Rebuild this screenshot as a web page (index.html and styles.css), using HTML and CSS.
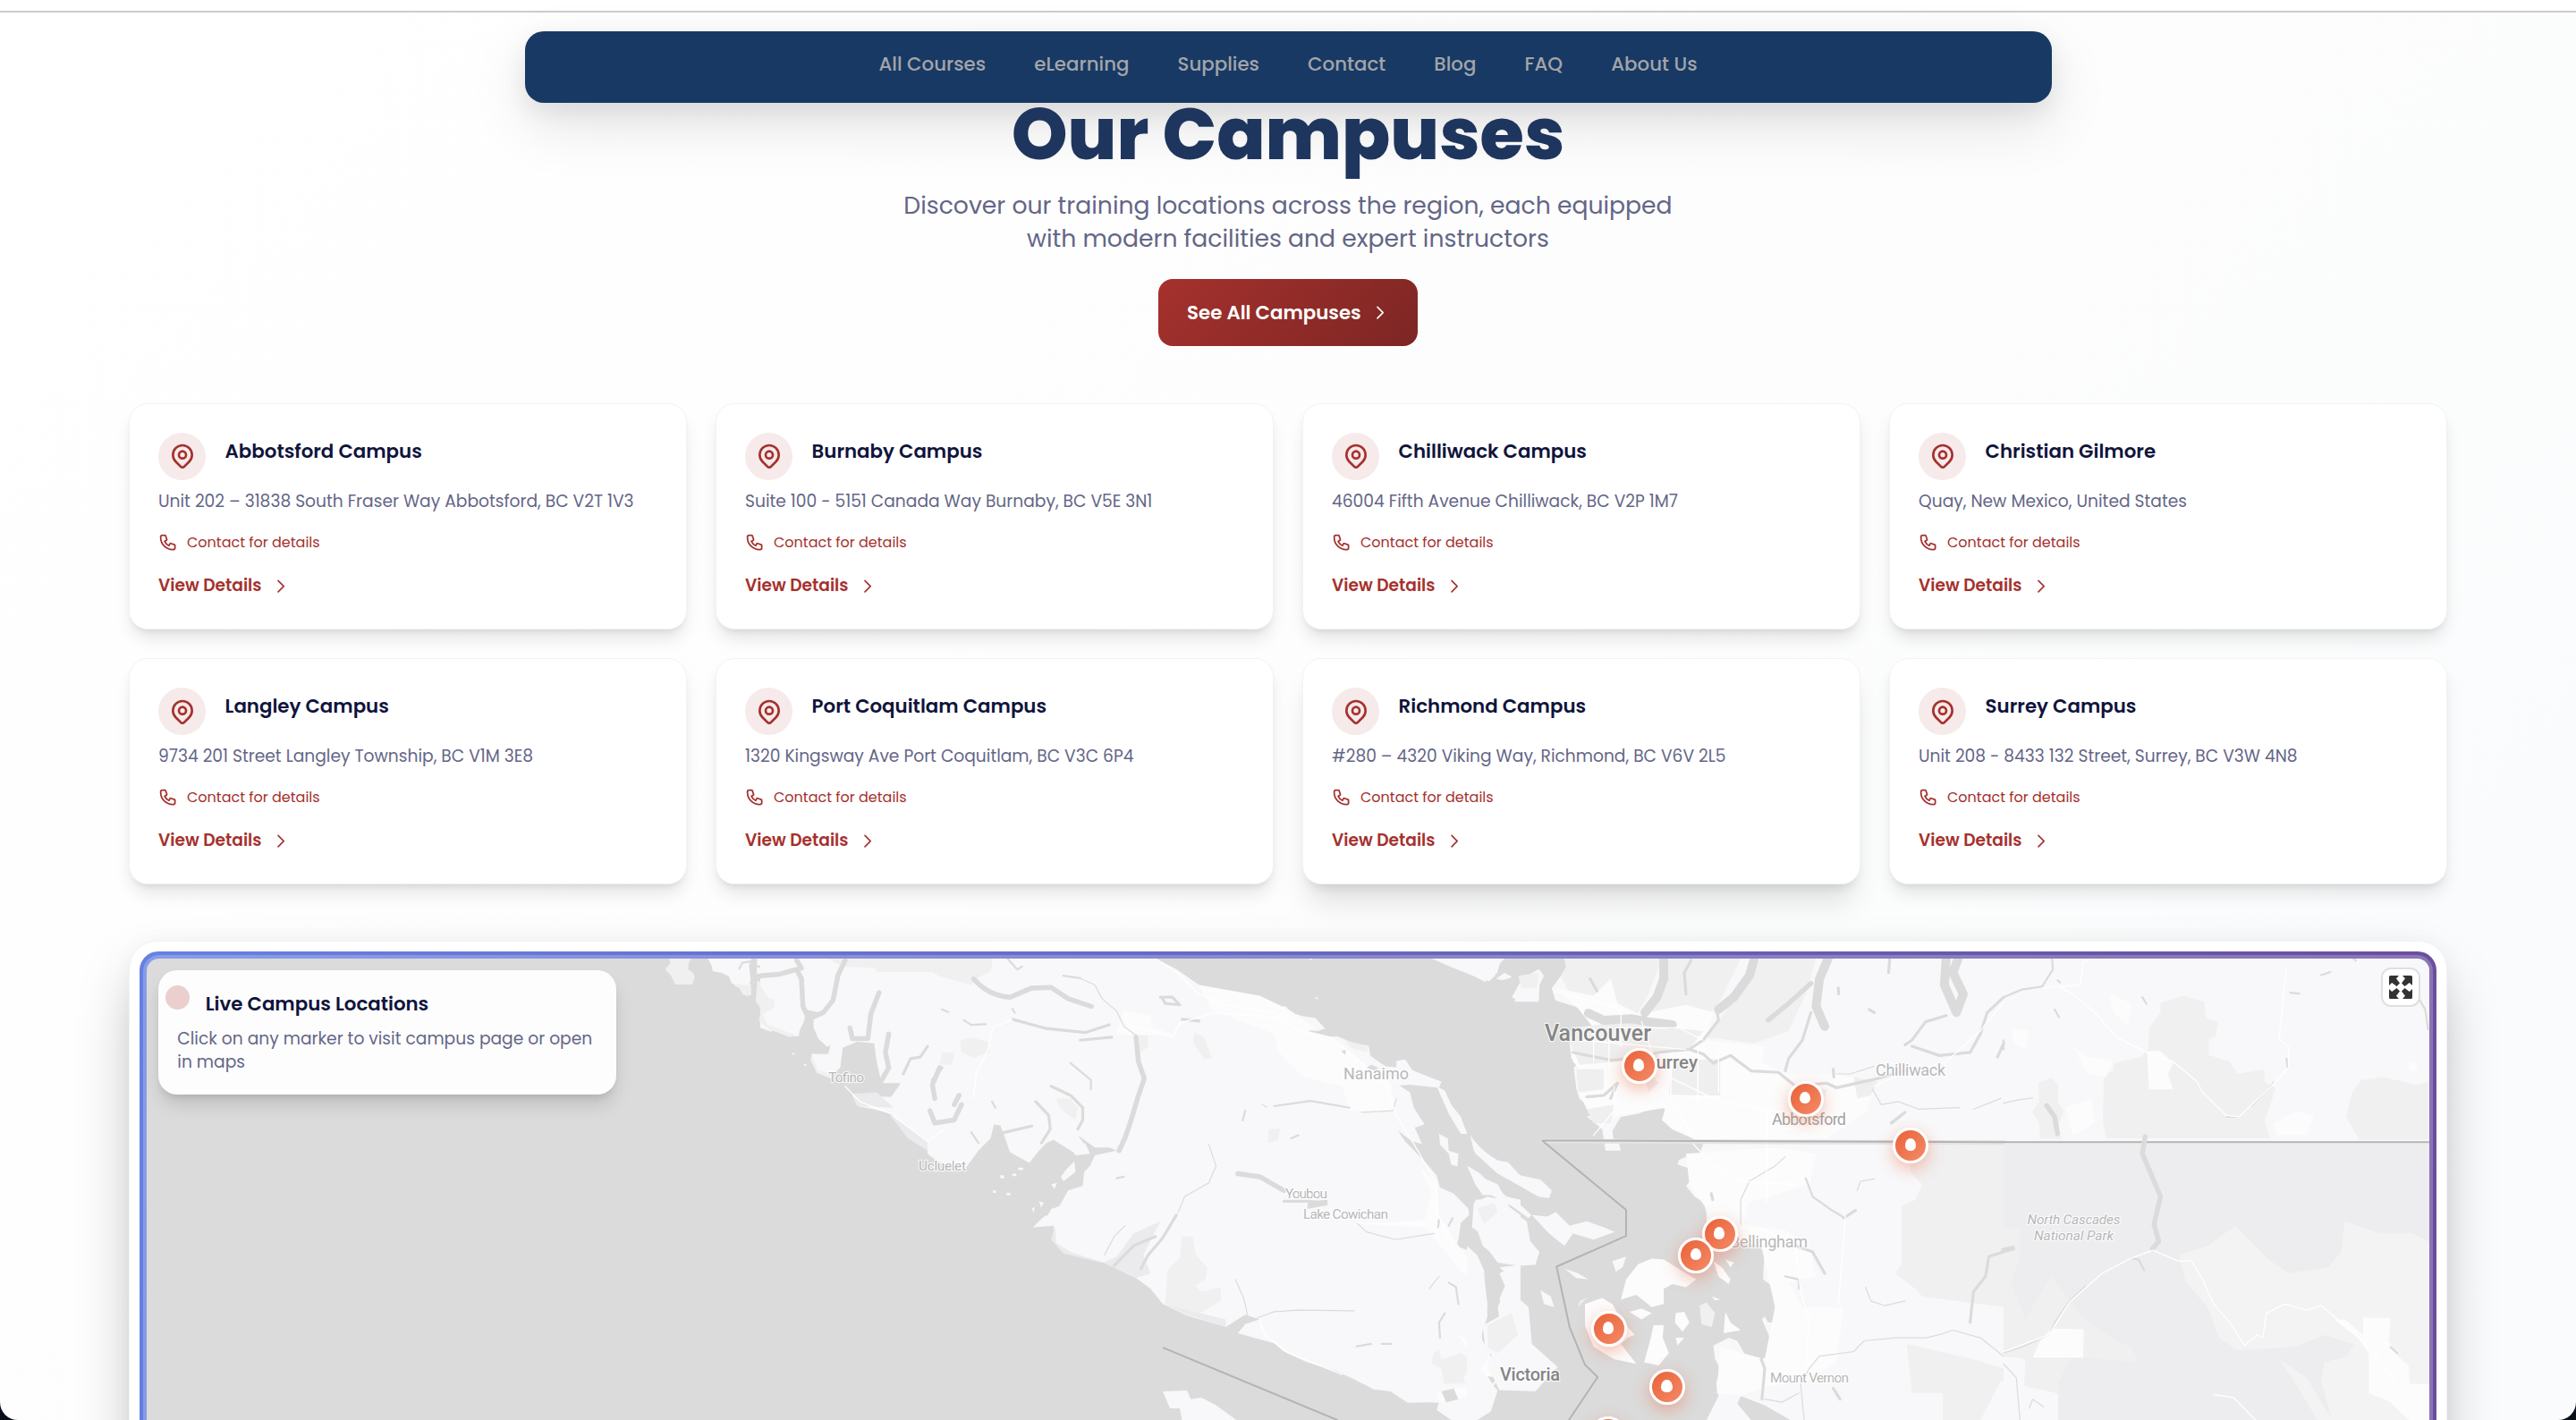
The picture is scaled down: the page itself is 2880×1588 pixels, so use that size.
FILE: index.html
```html
<!DOCTYPE html>
<html lang="en">
<head>
<meta charset="utf-8">
<title>Our Campuses</title>
<link rel="stylesheet" href="styles.css">
</head>
<body>
<svg class="sprite" aria-hidden="true">
  <symbol id="pin" viewBox="0 0 24 24"><path d="M17.657 16.657L13.414 20.9a1.998 1.998 0 01-2.827 0l-4.244-4.243a8 8 0 1111.314 0z"/><path d="M15 11a3 3 0 11-6 0 3 3 0 016 0z"/></symbol>
  <symbol id="phone" viewBox="0 0 24 24"><path d="M3 5a2 2 0 012-2h3.28a1 1 0 01.948.684l1.498 4.493a1 1 0 01-.502 1.21l-2.257 1.13a11.042 11.042 0 005.516 5.516l1.13-2.257a1 1 0 011.21-.502l4.493 1.498a1 1 0 01.684.949V19a2 2 0 01-2 2h-1C9.716 21 3 14.284 3 6V5z"/></symbol>
  <symbol id="chevron" viewBox="0 0 24 24"><path d="M9 5l7 7-7 7"/></symbol>
</svg>
<div class="window">
  <div class="topbar"></div>
  <nav class="nav">
    <a>All Courses</a><a>eLearning</a><a>Supplies</a><a>Contact</a><a>Blog</a><a>FAQ</a><a>About Us</a>
  </nav>
  <header class="hero">
    <h1>Our Campuses</h1>
    <p>Discover our training locations across the region, each equipped<br>with modern facilities and expert instructors</p>
    <a class="button">See All Campuses<svg class="icon-sm"><use href="#chevron"/></svg></a>
  </header>
  <main class="container">
    <section class="grid">
      <article class="card"><div class="card-head"><span class="badge"><svg><use href="#pin"/></svg></span><h3>Abbotsford Campus</h3></div><p class="address">Unit 202 – 31838 South Fraser Way Abbotsford, BC V2T 1V3</p><p class="contact"><svg class="icon-sm"><use href="#phone"/></svg>Contact for details</p><a class="details">View Details<svg class="icon-sm"><use href="#chevron"/></svg></a></article>
      <article class="card"><div class="card-head"><span class="badge"><svg><use href="#pin"/></svg></span><h3>Burnaby Campus</h3></div><p class="address">Suite 100 - 5151 Canada Way Burnaby, BC V5E 3N1</p><p class="contact"><svg class="icon-sm"><use href="#phone"/></svg>Contact for details</p><a class="details">View Details<svg class="icon-sm"><use href="#chevron"/></svg></a></article>
      <article class="card"><div class="card-head"><span class="badge"><svg><use href="#pin"/></svg></span><h3>Chilliwack Campus</h3></div><p class="address">46004 Fifth Avenue Chilliwack, BC V2P 1M7</p><p class="contact"><svg class="icon-sm"><use href="#phone"/></svg>Contact for details</p><a class="details">View Details<svg class="icon-sm"><use href="#chevron"/></svg></a></article>
      <article class="card"><div class="card-head"><span class="badge"><svg><use href="#pin"/></svg></span><h3>Christian Gilmore</h3></div><p class="address">Quay, New Mexico, United States</p><p class="contact"><svg class="icon-sm"><use href="#phone"/></svg>Contact for details</p><a class="details">View Details<svg class="icon-sm"><use href="#chevron"/></svg></a></article>
      <article class="card"><div class="card-head"><span class="badge"><svg><use href="#pin"/></svg></span><h3>Langley Campus</h3></div><p class="address">9734 201 Street Langley Township, BC V1M 3E8</p><p class="contact"><svg class="icon-sm"><use href="#phone"/></svg>Contact for details</p><a class="details">View Details<svg class="icon-sm"><use href="#chevron"/></svg></a></article>
      <article class="card"><div class="card-head"><span class="badge"><svg><use href="#pin"/></svg></span><h3>Port Coquitlam Campus</h3></div><p class="address">1320 Kingsway Ave Port Coquitlam, BC V3C 6P4</p><p class="contact"><svg class="icon-sm"><use href="#phone"/></svg>Contact for details</p><a class="details">View Details<svg class="icon-sm"><use href="#chevron"/></svg></a></article>
      <article class="card raised"><div class="card-head"><span class="badge"><svg><use href="#pin"/></svg></span><h3>Richmond Campus</h3></div><p class="address">#280 – 4320 Viking Way, Richmond, BC V6V 2L5</p><p class="contact"><svg class="icon-sm"><use href="#phone"/></svg>Contact for details</p><a class="details">View Details<svg class="icon-sm"><use href="#chevron"/></svg></a></article>
      <article class="card"><div class="card-head"><span class="badge"><svg><use href="#pin"/></svg></span><h3>Surrey Campus</h3></div><p class="address">Unit 208 - 8433 132 Street, Surrey, BC V3W 4N8</p><p class="contact"><svg class="icon-sm"><use href="#phone"/></svg>Contact for details</p><a class="details">View Details<svg class="icon-sm"><use href="#chevron"/></svg></a></article>
    </section>
    <section class="map-card"><div class="map-frame"><div class="map">
      <svg class="map-art" width="2552" height="516" viewBox="164 1072 2552 516">
        <!-- west inlets -->
        <g transform="translate(640 1060) scale(.3333)">
          <path class="park" d="M325 36L328 52 311 72 330 92 345 123 402 123 410 100 406 85 388 72 390 50 398 36zM620 110L615 180 632 205 626 245 645 275 665 282 690 268 720 290 700 120 650 120z"/>
          <path class="park" d="M525 100L545 128 560 135 570 155 585 162 600 158 598 120z"/>
          <path class="land" d="M455 36L468 62 470 78 500 84 525 95 535 120 590 125 598 110 592 60 600 36zM620 36L618 88 650 92 690 90 720 72 760 62 790 40 790 36zM665 125L720 100 745 115 758 160 760 215 765 250 760 295 745 298 710 268 665 268 658 205 680 185 655 160zM770 110L778 175 800 200 830 205 850 150 865 160 880 105 900 90 900 36 800 36 790 60 770 85zM810 230L880 235 900 200 900 305 855 332 825 305 808 265z"/>
          <path class="park" d="M720 82L745 68 778 75 770 95 735 98zM805 355L860 360 888 390 870 440 820 420 798 375z"/>
          <path class="land" d="M820 360L860 362 888 390 860 405z"/>
          <path class="water-line w4" d="M620 62L660 68 700 60M610 40L616 90 680 108 740 92M560 70L570 50 600 45M645 125L640 150"/>
        </g>
        <!-- Vancouver Island -->
        <g transform="translate(850 1050) scale(.54206 .34313)">
          <path class="land" d="M0 64L815 64 858 98 905 150 925 165 975 182 1020 185 1050 200 1065 220 1085 220 1092 240 1120 252 1145 258 1165 292 1150 300 1130 298 1135 312 1155 320 1190 318 1225 340 1255 348 1258 380 1275 400 1290 415 1312 418 1312 398 1330 393 1345 428 1380 450 1405 465 1400 485 1340 475 1318 478 1340 500 1348 550 1370 605 1350 615 1365 668 1345 660 1315 625 1330 660 1370 725 1395 770 1402 810 1430 830 1460 878 1462 900 1445 925 1440 980 1435 1000 1468 1020 1490 1075 1500 1190 1498 1240 1482 1250 1480 1300 1490 1380 1520 1385 1568 1370 1568 1400 1520 1440 1505 1475 1485 1510 1480 1540 1465 1568 1425 1568 1395 1535 1400 1512 1380 1510 1335 1512 1300 1475 1265 1468 1225 1435 1190 1410 1125 1378 1080 1345 1060 1318 985 1285 1000 1255 1030 1240 1000 1225 960 1265 880 1228 830 1190 805 1140 775 1105 708 1055 630 1025 608 990 605 935 562 940 585 905 610 890 635 820 665 805 668 760 680 740 690 705 735 690 720 680 690 680 655 640 678 690 655 703 635 685 605 655 590 665 575 690 555 730 515 695 505 650 495 608 482 605 475 650 450 690 420 755 365 725 345 700 345 665 305 650 270 570 235 555 200 545 190 510 270 515 290 470 250 470 240 400 235 340 200 335 170 355 165 420 150 440 120 430 105 375 140 375 145 345 110 290 120 240 95 230 90 270 75 318 0 290z"/>
          <path class="park" d="M140 64L170 90 235 95 240 108 355 108 370 122 435 150 445 130 475 105 480 64zM412 330L435 322 470 335 472 370 440 388 415 370zM0 150L15 190 30 200 28 225 5 245 15 280 75 315 60 320 20 295 0 270zM375 370L400 370 395 410 370 410zM610 520L640 520 655 550 650 590 620 555zM895 305L915 320 932 390 915 390 893 340zM870 970L892 970 898 1030 922 1070 918 1110 897 1130 910 1150 950 1135 950 1180 908 1218 880 1225 835 1190 840 1080 865 1040zM1048 620L1072 618 1068 655 1048 665zM1388 1350L1400 1340 1405 1370 1445 1350 1475 1380 1450 1430 1455 1450 1410 1450 1405 1400 1385 1385zM780 310L800 310 800 350 785 370zM1205 330L1255 350 1250 370 1220 355z"/>
          <path class="coast" d="M825 920L790 1030 805 1090 775 1105 708 1055 735 1035 770 960zM608 935L610 990 640 1020 708 1055 690 1050 625 1025 600 980zM190 505L240 500 275 550 200 545zM265 570L345 660 345 690 305 650zM830 1190L960 1240 960 1265 880 1225z"/>
          <path class="urban" d="M750 235L805 250 810 290 850 310 780 315 735 310zM905 150L1030 185 1090 230 1145 290 1130 300 1180 320 1240 400 1300 470 1310 565 1215 560 1200 480 1120 450 1070 370 1060 310 930 230zM1360 740L1395 800 1400 900 1440 1000 1490 1100 1450 1090 1370 940 1240 930 1370 915 1385 830zM1440 1290L1490 1330 1520 1385 1500 1480 1400 1510 1395 1480 1460 1460 1480 1390z"/>
          <path class="water-line w12" d="M440 130Q470 185 515 190L560 160 600 158 635 195 683 220M75 100L85 130 88 220 100 260 130 240 150 200 160 120 175 70M245 175L228 245 222 325 190 325 185 290M0 120L40 115 85 95 75 70M265 310L258 370 265 420 245 475M370 420L355 475 360 520M410 510L400 540"/>
          <path class="water-line w12" d="M775 320L780 400 792 455 778 520 765 590 752 650 740 690M985 765L1030 775 1080 820M350 560L360 600 400 590 415 540"/>
          <path class="water-line w8" d="M520 262L590 292 670 305 720 280M660 330L725 320M345 350L330 385 310 390 295 440M375 420L355 460M825 190L850 190 865 215 835 210 828 190M870 262L905 268M600 480L640 510 665 550 665 590 655 620M568 530L595 575 598 620 580 665M858 900L830 975 800 1030 785 1075M815 970L770 1000 730 1065M500 632L560 610M1080 855L1130 855 1165 860"/>
          <path class="water-line w4" d="M640 405L682 460 682 490M1000 560L995 592M435 630L450 665M478 530L485 550M1060 545L1135 528 1215 550M1420 1120L1435 1135 1440 1190M1412 1220L1400 1250 1402 1300M1230 1328L1260 1320M1282 1320L1302 1320M1095 650L1110 640M735 780L750 775M1400 915L1398 940M1428 910L1420 935M420 265L435 280 465 278M375 230L388 238M625 120L660 128M510 64L530 100 540 90M520 228L525 240"/>
          <path class="river" d="M660 128L690 150 705 195 735 235 750 285 775 315M925 670L940 740 925 795 875 840 862 890M752 935L730 970 710 1030M980 1110L997 1170 1005 1225M1025 1235L1060 1215 1110 1210 1225 1212M1230 925L1250 955 1310 980 1390 960M1240 565L1305 560 1312 520M1400 1100L1380 1140M1035 540L1045 548"/>
          <path class="road" d="M815 64L860 110 905 180 960 215 1060 240 1110 300 1200 350 1290 470 1310 570 1360 700 1395 800 1395 890 1430 1010 1485 1080 1488 1370M750 235L760 280 850 320 865 275 935 240 1090 260M520 262L480 290 470 360 445 440 440 520M1230 925L1370 930M175 480L205 530 270 570 345 660 380 620M1030 1240L1040 1290 1090 1350 1200 1420"/>
          <path class="water" d="M1250 420L1260 410 1275 420 1268 430zM1198 365L1208 362 1206 378zM1130 855L1170 850 1170 868 1128 880z"/>
          <path class="land" d="M1385 64L1425 92 1470 120 1495 140 1520 110 1528 64zM1518 130L1535 110 1550 125 1530 135zM1550 190L1568 140 1568 205zM1395 480L1412 495 1425 540 1445 580 1458 635 1445 635 1420 570zM1400 635L1418 650 1420 690 1440 700 1438 742 1425 735 1420 700 1402 670zM1465 645L1490 690 1568 770 1568 795 1510 745 1475 700zM1460 740L1485 765 1500 790 1540 840 1568 850 1568 880 1525 835 1490 835 1475 800zM1475 850L1520 845 1568 900 1568 985 1550 990 1550 1020 1520 1038 1490 1000 1475 930zM1525 1070L1568 1062 1568 1250 1530 1220 1525 1170 1545 1100zM1490 1260L1525 1230 1568 1270 1568 1375 1520 1380 1495 1330zM632 750L648 725 650 760 625 790 620 775zM640 680L670 665 680 700 650 705zM830 1475L880 1472 888 1500 910 1495 940 1520 982 1568 870 1568 865 1530 845 1530zM600 880L620 870 612 900 590 910zM495 770h8v10h-8zM520 765h8v8h-8zM600 800l12-5-5 20zM575 855l10 5-6 15zM560 880l6-8-2 20zM480 820h6v8h-6zM508 828h8v8h-8zM532 745h10v8h-10zM90 408h5v6h-5zM65 372h6v5h-6zM1145 190h5v6h-5zM1132 64h6v3h-6z"/>
          <path class="water" d="M1405 1475L1430 1465 1440 1500 1415 1510zM1500 1425L1520 1430 1510 1450zM1478 870l12 20-8 10z"/>
          <path class="border" d="M832 1333L1190 1568"/>
        </g>
        <!-- mainland -->
        <g transform="translate(1640 1050) scale(.38272 .34313)">
          <path class="land" d="M285 64L290 90 275 120 248 160 258 200 315 220 350 240 370 290 340 300 310 320 300 335 305 390 330 400 312 420 320 490 328 520 360 550 368 575 350 578 395 620 405 690 450 690 442 660 428 650 425 625 450 580 500 570 560 545 580 555 570 590 600 620 640 640 660 650 690 670 680 700 655 702 620 720 615 735 650 748 668 738 672 765 640 805 665 840 693 860 700 900 700 950 740 990 790 945 850 970 870 1010 865 1110 890 1130 925 1190 905 1248 880 1250 870 1230 862 1240 885 1300 880 1350 855 1385 820 1370 790 1310 765 1300 720 1325 725 1370 740 1400 728 1450 735 1490 700 1568 830 1568 790 1515 800 1490 870 1520 945 1568 2850 1568 2850 64z"/>
          <path class="park" d="M285 64L290 90 275 120 300 180 380 190 430 215 440 260 500 240 530 180 570 64zM590 64L570 170 530 250 690 270 740 200 800 64zM860 64L790 180 740 260 700 320 840 340 940 300 990 180 1020 64zM1300 660L1568 660 2850 660 2850 1568 1830 1568 1720 1480 1560 1440 1500 1568 1390 1568 1390 1480 1300 1480 1285 1320 1480 1370 1568 1400 1568 1200 1330 1165 1310 1140 1250 1090 1270 1060 1270 870 1310 850 1330 800 1295 760z"/>
          <path class="urban" d="M258 160L370 185 420 130 440 210 500 245 640 215 720 240 700 330 870 350 860 400 930 440 1080 440 1190 470 1170 560 1050 650 690 665 600 620 570 590 580 550 425 580 350 555 320 480 340 440 310 400 300 340 370 290 320 220zM640 700L900 680 1020 700 1000 800 820 860 810 930 930 950 1000 1000 1020 1100 940 1120 980 1200 1100 1200 1080 1380 990 1440 870 1460 800 1490 730 1480 740 1330 870 1370 900 1200 860 1000 740 980 700 880 650 800z"/>
          <path class="built" d="M310 290L450 270 690 300 650 360 540 370 440 400 330 410 300 340zM320 425L400 425 400 490 325 500zM600 400L740 390 740 510 590 510zM430 330L560 340 560 400 430 390zM945 500L1050 490 1040 540 960 560zM1130 450L1200 465 1180 510 1140 520zM350 555L430 540 420 600 370 600zM510 400L560 470 530 500z"/>
          <path class="water-line w14" d="M355 242L400 265 480 260 530 270 600 280M575 64L575 130 555 190 520 240M840 64L825 120 780 190 735 230M1055 64L1030 130 1020 220 1045 285M1400 64L1395 150 1430 240 1450 180 1420 110 1435 64"/>
          <path class="water-line w12" d="M1005 145L940 210 880 265"/>
          <path class="water-line w8" d="M730 230L735 265 690 330 650 360 560 370 480 390 420 395 310 370M420 520L440 470 400 510 350 515M650 360L690 375 720 405 770 380 830 430 910 435 960 480 1050 470 1080 485 1200 455 1280 430M1005 240L980 330 940 390 930 430M655 70L635 110 640 180M1400 250L1340 270 1300 330 1280 345M1568 190L1520 240 1500 310 1470 370 1380 380 1300 350M360 130L380 170M1568 1020L1525 1035 1515 1100 1480 1150 1470 1250M1280 565L1240 600M1135 885L1100 910M1045 1090L1010 1020 960 1000M860 1370L870 1400 862 1500M1070 1465L1090 1500M1568 340L1550 385M1235 64L1232 110M1175 230L1190 240M1085 160L1086 180M1070 425L1072 450M714 830L718 850"/>
          <path class="water-line w4" d="M990 780L1010 840 1060 880 1105 910M930 1100L970 1110 970 1140"/>
          <path class="river" d="M1140 820L1150 790 1190 782M1568 1360L1500 1300 1420 1275 1380 1290 1340 1300 1250 1300 1160 1310 1130 1345 1030 1360 1000 1400 975 1450 985 1568M1185 490L1210 540 1260 530 1320 555 1440 550M1165 1135L1180 1180 1220 1195 1280 1180M1480 555L1560 520M800 930L800 850 825 790 900 740 930 710M1080 440L1120 440 1190 415M870 1500L920 1510 970 1480"/>
          <path class="road" d="M255 170L370 205 430 220 450 240 450 350M370 290L370 400M415 310L415 420M330 330L640 360M450 290L620 290 690 330M600 370L595 510 740 515M675 350L675 550M735 360L735 500M430 480L430 560 370 640M590 450L740 530 900 560 1050 590M590 520L660 640M510 270L550 400M875 560L875 860M655 660L720 740 800 790 960 800M800 940L870 950 960 1000 975 1150 1000 1240 990 1400M1105 900L1100 1000 1085 1190M920 620L1020 610M1568 205L1500 300 1400 400 1270 440 1190 480"/>
          <path class="land" d="M0 64L110 64 88 90 82 120 65 138 30 125 0 95zM148 155L175 120 210 98 225 120 212 150 210 205 140 205zM105 115L130 120 115 132zM10 640L30 670 80 720 120 728 155 770 215 785 248 820 240 845 210 840 185 825 130 790 90 765 50 725 20 690zM0 740L40 775 90 800 110 840 160 870 188 900 180 910 130 870 80 840 30 810zM20 860L60 840 110 850 135 890 175 920 185 985 212 1020 200 1062 150 1065 90 1055 60 1010 40 960 15 940zM190 900L235 905 260 890 300 935 350 920 400 940 432 955 370 980 310 960 285 1000 240 960zM0 1000L30 1030 50 1080 60 1230 40 1300 70 1350 40 1400 70 1450 90 1470 70 1540 30 1568 0 1568zM95 1090L130 1070 155 1100 150 1170 180 1200 190 1320 265 1395 200 1475 95 1470 60 1390 100 1280 90 1200 115 1140zM285 1075L325 1090 355 1110 320 1105zM425 1050L465 1035 455 1070 435 1085zM215 1145L245 1165 255 1200 225 1190z"/>
          <path class="urban" d="M500 1060L540 1042 575 1045 625 1080 670 1110 640 1135 600 1125 575 1140 575 1190 540 1200 495 1160 450 1175 465 1110zM345 1190L395 1170 425 1190 450 1240 490 1290 470 1300 450 1320 495 1385 430 1370 370 1330 345 1260zM545 1260L575 1258 572 1300 590 1350 560 1390 518 1380 535 1310zM610 1220L635 1215 650 1250 630 1280 608 1250zM755 1215L770 1250 800 1275 750 1285zM475 1215L510 1205 540 1220 510 1240zM720 1050L745 1070 770 1110 765 1125 735 1100zM715 1165L740 1175 725 1178zM610 1300L635 1300 615 1325zM755 1045L780 1055 770 1070z"/>
          <path class="park" d="M680 1195L700 1185 725 1220 715 1265 685 1255zM150 120L210 110 205 160 160 160zM30 880L80 860 90 890 50 930zM330 1180L350 1170 325 1200zM60 1260L130 1220 150 1290 90 1350 60 1330z"/>
          <path class="glow" d="M1568 664L220 659"/>
          <path class="border" d="M2850 662L1568 662 1040 660 220 657 465 883 465 968 262 1068 300 1265 345 1388 382 1428 298 1568"/>
        </g>
        <!-- Cascades -->
        <g transform="translate(2240 1050) scale(.40816 .34313)">
          <path class="park" d="M490 185L550 205 555 260 588 270 580 320 562 325 562 378 620 400 640 440 715 425 715 465 745 485 730 545 715 590 730 650 280 650 272 590 275 440 300 430 302 405 375 385 395 360 400 290 430 240 430 210zM980 460L1040 450 1130 475 1166 465 1166 655 975 655 938 580 955 500zM95 470L130 452 150 475 148 530 165 560 145 620 160 652 100 652 98 600 78 565 98 530z"/>
          <path class="urban" d="M393 365L430 365 465 405 450 440 465 490 398 490zM20 290L70 300 60 360 30 340zM190 350L220 380 300 400 280 450 230 440zM170 550L240 520 250 600 190 640zM290 180L350 210 340 280 300 240zM1110 400L1135 410 1130 430 1112 425zM740 600L800 560 850 580 830 640 750 640z"/>
          <path class="cascade" d="M0 668L1166 668 1166 985 1120 960 1030 960 935 920 925 1020 890 1070 780 1090 720 1040 635 935 560 1000 480 1030 500 1120 560 1200 590 1300 640 1340 880 1290 960 1320 940 1360 880 1380 870 1440 900 1568 150 1568 150 1450 180 1370 220 1365 370 1380 350 1330 310 1310 220 1240 130 1100 60 1240 20 1120 45 1040 45 945 0 945z"/>
          <path class="meadow" d="M480 1030L560 1000 635 935 720 1040 780 1090 890 1070 925 1020 935 920 1030 960 1120 960 1166 990 1166 1568 900 1568 870 1440 880 1380 940 1360 960 1320 880 1290 800 1330 640 1340 590 1300 560 1200 500 1120zM755 1370L830 1430 900 1568 860 1568 800 1450z"/>
          <path class="urban" d="M130 1270L220 1272 218 1365 80 1365 100 1310zM985 1235L1060 1235 1055 1310 1080 1360 1110 1390 1112 1450 1166 1450 1166 1568 1110 1568 1060 1510 1000 1480 1000 1350 970 1300 905 1240 935 1240 985 1290z"/>
          <path class="land" d="M0 1360L60 1370 55 1480 100 1485 120 1568 0 1568z"/>
          <path class="water-line w12" d="M388 645L380 700 402 760 430 840 412 930 425 985 408 1010M118 543L140 580 148 635M0 1015L25 1008"/>
          <path class="water-line w4" d="M133 64L135 100 108 150M108 155L50 165 0 190M870 118L895 108M148 135L155 142M350 1040L370 1045 385 1080M0 330V360M785 175L810 178M380 190L392 212M140 230L152 255M1060 1330L1078 1350M775 390L778 420M1140 200L1155 230 1163 295M958 64L965 70M612 580L645 580"/>
          <path class="river" d="M180 1180L140 1250 125 1290 50 1330 0 1350M225 1130L180 1180M0 1385L35 1430 45 1568M70 1530L80 1500 110 1525M0 535L40 525 80 518M680 545L725 490 740 465"/>
          <path class="road" d="M245 64L218 75 210 150 150 155 108 160M150 155L185 175 250 240 310 320 400 375 465 400 530 465 545 500 610 575 645 580 725 490 780 420 782 355 755 325 765 200 775 100M410 1015L480 1050 515 1050 545 1110 575 1190 620 1250 660 1325 695 1290 710 1300 720 1220 770 1190 830 1210 870 1195 930 1255 1010 1340 1080 1460M408 1015L350 1040 270 1090 180 1185 125 1290 0 1345M575 1485L630 1495 690 1568"/>
        </g>
        <g class="labels">
          <text class="city" x="1727" y="1164" textLength="119" font-size="25">Vancouver</text>
          <text class="city" x="1839" y="1195" textLength="59" font-size="20.5">Surrey</text>
          <text class="city" x="1677" y="1543.5" textLength="67" font-size="20">Victoria</text>
          <text class="town mid" x="1981" y="1257.5" textLength="83" font-size="18">Abbotsford</text>
          <text class="town" x="2097" y="1203" textLength="78" font-size="18">Chilliwack</text>
          <text class="town" x="1934" y="1394.5" textLength="87" font-size="18">Bellingham</text>
          <text class="town" x="1979" y="1546" textLength="88" font-size="15.5">Mount Vernon</text>
          <text class="town" x="1502" y="1207" textLength="73" font-size="18">Nanaimo</text>
          <text class="town" x="926" y="1210" textLength="40" font-size="15.5">Tofino</text>
          <text class="town" x="1027" y="1308.5" textLength="53" font-size="15.5">Ucluelet</text>
          <text class="town" x="1437" y="1340" textLength="47" font-size="15.5">Youbou</text>
          <text class="town" x="1457" y="1363" textLength="95" font-size="15.5">Lake Cowichan</text>
          <text class="town it" x="2266.5" y="1368.5" textLength="104" font-size="15.5">North Cascades</text>
          <text class="town it" x="2274" y="1387" textLength="89" font-size="15.5">National Park</text>
        </g>
      </svg>
      <i class="marker m1"></i><i class="marker m2"></i><i class="marker m3"></i><i class="marker m4"></i><i class="marker m5"></i><i class="marker m6"></i><i class="marker m7"></i><i class="marker m8"></i>
      <aside class="info"><i class="pulse"></i><h4>Live Campus Locations</h4><p>Click on any marker to visit campus page or open in maps</p></aside>
      <button class="fullscreen" aria-label="Fullscreen"><svg viewBox="0 0 26 26"><path d="M1.500 0H11L8 3.200l4 5.300-3.500 3.500-5.300-4L0 11V1.500Q0 0 1.500 0zM24.500 0H15l3 3.200-4 5.300 3.500 3.500 5.300-4L26 11V1.500Q26 0 24.500 0zM1.500 26H11l-3-3.200 4-5.300L8.500 14l-5.300 4L0 15v9.500Q0 26 1.500 26zM24.500 26H15l3-3.200-4-5.300 3.500-3.500 5.300 4L26 15v9.500Q26 26 24.500 26z"/></svg></button>
    </div></div></section>
  </main>
</div>
</body>
</html>
```
FILE: styles.css
```css
* { box-sizing: border-box; }
html, body { margin: 0; height: 1588px; overflow: hidden; background: #0a0f1a; }
body { font-family: Poppins, Inter, sans-serif; font-feature-settings: "cv11" 1; }
h1, h3, h4, p { margin: 0; }
.sprite { display: none; }
.window { height: 1588px; overflow: hidden; border-radius: 0 0 20px 20px; background: linear-gradient(135deg, #fff 0%, #fdfdfd 50%, #f9fbfc 100%); }
.topbar { height: 14px; background: #fff; border-bottom: 2px solid #ccc; }

.nav { width: 1707px; height: 80px; margin: 21px auto 0; padding-bottom: 7px; border-radius: 21px; background: #183963; color: #a2a5aa; display: flex; align-items: center; justify-content: center; gap: 54.1px; font-size: 21.33px; font-weight: 500; white-space: nowrap; box-shadow: 0 26px 66px rgba(0,0,0,.1), 0 10px 28px rgba(0,0,0,.08); }

.hero { display: flex; flex-direction: column; align-items: center; text-align: center; }
.hero h1 { margin-top: 2px; line-height: 66px; font-size: 80px; font-weight: 800; color: #1e355e; }
.hero p { margin-top: 28px; font-size: 26.67px; line-height: 37.3px; color: #646687; }
.button { margin-top: 26.4px; width: 290px; height: 75px; padding-left: 32px; border-radius: 16px; display: flex; align-items: center; gap: 10.7px; background: linear-gradient(135deg, #a5312d, #7d2624); color: #fff; font-size: 21.33px; font-weight: 600; white-space: nowrap; }

svg { fill: none; stroke: currentColor; stroke-width: 2; stroke-linecap: round; stroke-linejoin: round; }
.icon-sm { width: 21.3px; height: 21.3px; flex: none; }

.container { width: 2592px; margin: 63.6px auto 0; }
.grid { display: grid; grid-template-columns: repeat(4, 1fr); grid-auto-rows: 253.3px; gap: 32px; }
.card { padding: 32.2px 32px 0; border: 1.3px solid #f2f3f4; border-radius: 21px; background: #fff; box-shadow: 0 13px 20px -4px rgba(0,0,0,.11), 0 5px 8px -5px rgba(0,0,0,.12); }
.raised { box-shadow: 0 27px 33px -7px rgba(0,0,0,.11), 0 10px 13px -7px rgba(0,0,0,.12); }
.card-head { display: flex; gap: 21.3px; }
.badge { width: 53.3px; height: 53.3px; border-radius: 50%; background: #f6eaea; color: #a5312d; display: flex; align-items: center; justify-content: center; }
.badge svg { width: 32px; height: 32px; }
.card h3 { margin-top: 6px; font-size: 21.33px; line-height: 29.3px; font-weight: 600; color: #10143c; }
.address { margin-top: 11px; font-size: 18.67px; line-height: 26.7px; color: #646687; white-space: nowrap; }
.contact { margin-top: 20px; display: flex; align-items: center; gap: 10.7px; font-size: 16px; line-height: 24px; color: #a5312d; }
.details { margin-top: 23.4px; display: flex; align-items: center; gap: 10.7px; font-size: 18.67px; line-height: 26.7px; font-weight: 600; color: #a5312d; }
.details svg, .button svg { stroke-width: 1.8; }

.map-card { margin-top: 63px; height: 800px; padding: 11px; border: 1px solid #f2f3f4; border-radius: 32px; background: #fff; box-shadow: 0 33px 66px -10px rgba(0,0,0,.28), 0 0 24px rgba(0,0,0,.03); }
.map-frame { height: 760px; padding: 8px; border-radius: 21px; background: linear-gradient(100deg, #6680e2, #6a4c9c); }
.map { position: relative; height: 744px; border-radius: 14px; background: #dbdbdb; box-shadow: 0 0 0 4px rgba(255,255,255,.22); }
.map-art { display: block; border-radius: 14px 14px 0 0; stroke: none; overflow: hidden; }
.land { fill: #f8f8fa; }
.park { fill: #f0f0f0; }
.coast { fill: #ebebed; }
.cascade { fill: #ededef; }
.meadow { fill: #f3f3f3; }
.urban { fill: #fcfcfc; }
.built { fill: #efefef; }
.water { fill: #dbdbdb; }
.water-line, .river, .road, .border, .glow { fill: none; vector-effect: non-scaling-stroke; stroke: #dbdbdb; }
.w14 { stroke-width: 10; }
.w12 { stroke-width: 5.5; }
.w8 { stroke-width: 3.2; }
.w4 { stroke-width: 2.2; }
.river { stroke-width: 1.2; }
.road { stroke: #fff; stroke-width: 1.3; }
.border { stroke: #b4b4b4; stroke-width: 2; }
.glow { stroke: #e4e4e4; stroke-width: 5; }
.labels { font-family: Roboto, "Liberation Sans", sans-serif; paint-order: stroke; stroke: rgba(255,255,255,.75); stroke-width: 2.5px; }
.city { fill: #858585; font-weight: 500; }
.town { fill: #b8b8b8; }
.mid { fill: #a2a2a2; }
.it { font-style: italic; }

.marker { position: absolute; width: 40px; height: 40px; margin: -20px 0 0 -20px; border: 3.7px solid #fff; border-radius: 50%; background: linear-gradient(135deg, #ea6138, #f38b68); box-shadow: 0 6px 18px rgba(235,99,60,.42); }
.marker::after { content: ""; position: absolute; left: 10.2px; top: 9px; width: 12.3px; height: 13.8px; border-radius: 50% 50% 50% 50% / 60% 60% 40% 40%; background: #fff; }
.m1 { left: 1668.5px; top: 120px; }
.m2 { left: 1855px; top: 156.5px; }
.m3 { left: 1972.4px; top: 209px; }
.m4 { left: 1758.8px; top: 308px; }
.m5 { left: 1732.4px; top: 331.5px; }
.m6 { left: 1634.8px; top: 414px; }
.m7 { left: 1700.3px; top: 479px; }
.m8 { left: 1633.7px; top: 532px; }

.info { position: absolute; left: 13px; top: 13px; width: 512px; height: 139px; padding: 23px 21.3px; border-radius: 21px; background: #fdfdfd; box-shadow: 0 13px 20px -2px rgba(0,0,0,.13), 0 5px 8px -4px rgba(0,0,0,.12); }
.pulse { position: absolute; left: 8px; top: 17px; width: 26.7px; height: 26.7px; border-radius: 50%; background: #ebcfcf; }
.info h4 { margin-left: 31.5px; font-size: 21.33px; line-height: 29px; font-weight: 600; color: #10143c; }
.info p { margin-top: 11.5px; font-size: 18.67px; line-height: 26.7px; color: #646687; }
.fullscreen { position: absolute; right: 10px; top: 10px; width: 44px; height: 44px; padding: 6.5px; border: 2.7px solid #dfdfe1; border-radius: 11px; background: #fff; }
.fullscreen svg { display: block; width: 26px; height: 26px; fill: #333; stroke: none; }
```
